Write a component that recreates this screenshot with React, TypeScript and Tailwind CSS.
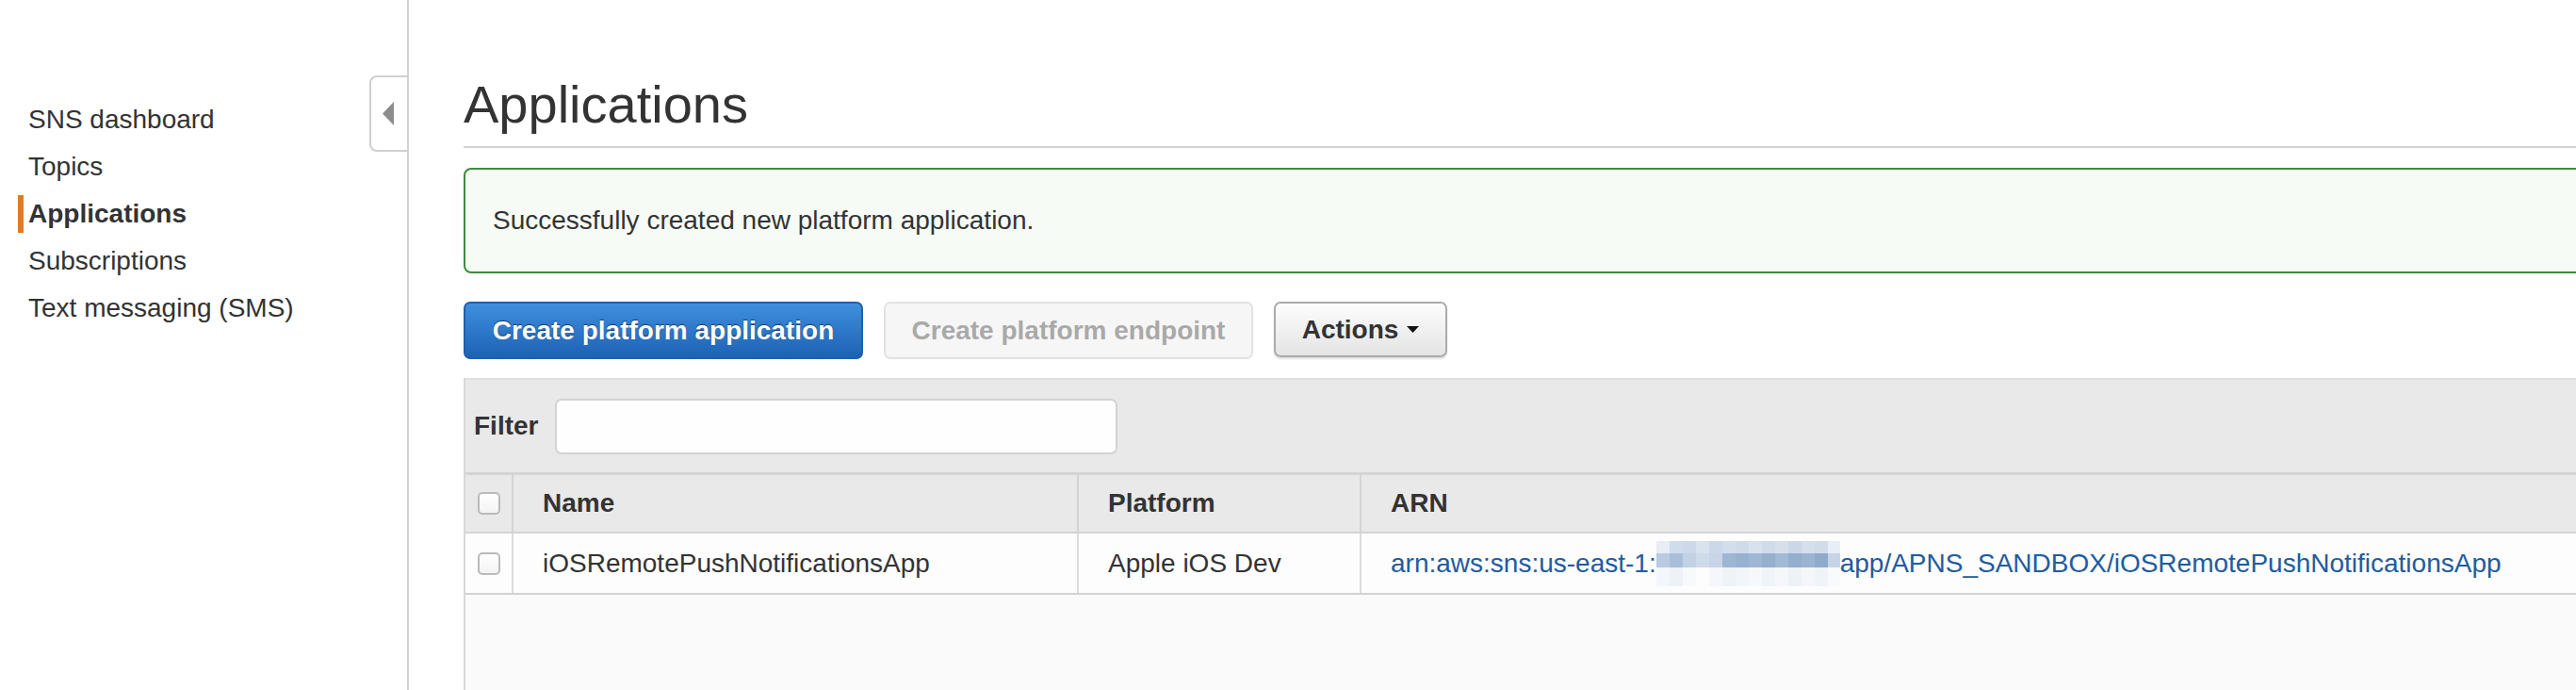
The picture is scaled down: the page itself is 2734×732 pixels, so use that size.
import React from "react";

const navItems = [
  "SNS dashboard",
  "Topics",
  "Applications",
  "Subscriptions",
  "Text messaging (SMS)",
];

// pixelated blur over the account id
const blurRows = [
  ["#e6edf5", "#cfdcec", "#cdd9ea", "#d9e3ef", "#cbd8e9", "#d3deec", "#d0dbea", "#d8e2ee", "#cfdaea", "#d6e0ed", "#cad7e8", "#d5dfed", "#d0dcea", "#e8eef5"],
  ["#b8cbe1", "#a9bfd9", "#c2d1e4", "#d0dbea", "#c8d5e7", "#9db6d4", "#97b1d1", "#9fb7d4", "#95afcf", "#a3bad6", "#93aece", "#9bb4d2", "#8fabcc", "#c6d4e6"],
  ["#f3f6fa", "#eef2f7", "#f7f9fb", "#fdfdfe", "#f5f7fa", "#eff3f8", "#f2f5f9", "#f6f8fb", "#f0f4f8", "#f5f7fa", "#eef2f7", "#f4f6fa", "#f0f3f8", "#f8fafc"],
];
const rowY = [0, 13, 28];
const rowH = [13, 15, 20];

const Blur = () => (
  <svg width="195" height="48" viewBox="0 0 195 48" className="shrink-0">
    {blurRows.map((row, r) =>
      row.map((c, i) => (
        <rect key={`${r}-${i}`} x={i * 14} y={rowY[r]} width="14" height={rowH[r]} fill={c} />
      ))
    )}
  </svg>
);

const Checkbox = () => (
  <div className="w-[24px] h-[24px] rounded-[5px] border-2 border-[#bababa] bg-linear-to-b from-white to-[#f3f3f3]" />
);

export default function App() {
  return (
    <div className="flex w-[2734px] h-[732px] overflow-hidden bg-white text-[#333] font-['Liberation_Sans',Arial,sans-serif]">
      {/* sidebar */}
      <aside className="relative w-[434px] shrink-0 border-r-2 border-[#d2d2d2]">
        <nav className="flex flex-col gap-[10px] pt-[107px]">
          {navItems.map((item) => (
            <a
              key={item}
              className={
                item === "Applications"
                  ? "ml-[19px] h-[40px] leading-[40px] border-l-[6px] border-[#dd7b2a] pl-[5px] text-[28px] font-bold text-[#333]"
                  : "ml-[19px] h-[40px] leading-[40px] border-l-[6px] border-transparent pl-[5px] text-[28px] text-[#333]"
              }
            >
              {item}
            </a>
          ))}
        </nav>
        <div className="absolute left-[392px] top-[80px] w-[40px] h-[81px] rounded-l-[8px] border-2 border-r-0 border-[#d0d0d0] bg-white">
          <svg width="12" height="25" viewBox="0 0 12 25" className="absolute left-[12px] top-[26px]">
            <polygon points="12,0 12,25 0,12.5" fill="#8d8d8d" />
          </svg>
        </div>
      </aside>

      {/* main */}
      <main className="flex-1 min-w-0 flex flex-col pl-[58px]">
        <h1 className="w-[2300px] shrink-0 mt-[79px] text-[56px] leading-[64px] font-normal text-[#333] pb-[12px] border-b-2 border-[#d2d2d2]">
          Applications
        </h1>

        <div className="w-[2300px] shrink-0 mt-[21px] h-[112px] flex items-center pl-[29px] border-2 border-[#3d8b3d] rounded-[8px] bg-[#f6fbf5] text-[28px] text-[#333]">
          Successfully created new platform application.
        </div>

        <div className="mt-[30px] flex gap-[22px] h-[61px] shrink-0">
          <button className="w-[424px] h-[61px] rounded-[7px] border-2 border-[#1d5fae] bg-linear-to-b from-[#3f8fdf] to-[#1d62b4] text-white text-[28px] font-bold [text-shadow:0_-1px_1px_rgba(0,0,0,0.55)]">
            Create platform application
          </button>
          <button className="w-[392px] h-[61px] rounded-[7px] border-2 border-[#e2e2e2] bg-[#f6f6f6] text-[#a9a9a9] text-[28px] font-bold">
            Create platform endpoint
          </button>
          <button className="w-[184px] h-[59px] flex items-center justify-center gap-[9px] rounded-[7px] border-2 border-[#ababab] bg-linear-to-b from-[#fdfdfd] to-[#e4e4e4] text-[#333] text-[28px] font-bold shadow-[0_2px_2px_rgba(0,0,0,0.12)]">
            Actions
            <svg width="13" height="7" viewBox="0 0 13 7">
              <polygon points="0,0 13,0 6.5,7" fill="#111" />
            </svg>
          </button>
        </div>

        {/* table panel */}
        <div className="w-[2300px] mt-[20px] flex-1 flex flex-col border-l-2 border-[#d8d8d8]">
          <div className="h-[103px] shrink-0 flex items-center pl-[9px] bg-[#e9e9e9] border-t-2 border-[#e0e0e0] border-b-[3px] border-b-[#d4d4d4]">
            <span className="text-[28px] font-bold text-[#333]">Filter</span>
            <input className="ml-[18px] w-[597px] h-[59px] rounded-[7px] border-2 border-[#d3d3d3] bg-[#fefefe] outline-none" />
          </div>

          <div className="h-[62px] shrink-0 flex bg-[#e9e9e9] border-b-2 border-[#d4d4d4] text-[28px] font-bold text-[#333]">
            <div className="w-[51px] flex items-center justify-center border-r-2 border-[#d4d4d4]">
              <Checkbox />
            </div>
            <div className="w-[600px] flex items-center pl-[31px] border-r-2 border-[#d4d4d4]">Name</div>
            <div className="w-[300px] flex items-center pl-[31px] border-r-2 border-[#d4d4d4]">Platform</div>
            <div className="flex-1 flex items-center pl-[31px]">ARN</div>
          </div>

          <div className="h-[65px] shrink-0 flex bg-[#fdfdfd] border-b-2 border-[#d2d2d2] text-[28px] text-[#333]">
            <div className="w-[51px] flex items-center justify-center border-r-2 border-[#dcdcdc]">
              <Checkbox />
            </div>
            <div className="w-[600px] flex items-center pl-[31px] border-r-2 border-[#dcdcdc]">iOSRemotePushNotificationsApp</div>
            <div className="w-[300px] flex items-center pl-[31px] border-r-2 border-[#dcdcdc]">Apple iOS Dev</div>
            <div className="flex-1 flex items-center pl-[31px] text-[#225b9e]">
              <span>arn:aws:sns:us-east-1:</span>
              <Blur />
              <span>app/APNS_SANDBOX/iOSRemotePushNotificationsApp</span>
            </div>
          </div>

          <div className="flex-1 bg-[#fafafa]" />
        </div>
      </main>
    </div>
  );
}
